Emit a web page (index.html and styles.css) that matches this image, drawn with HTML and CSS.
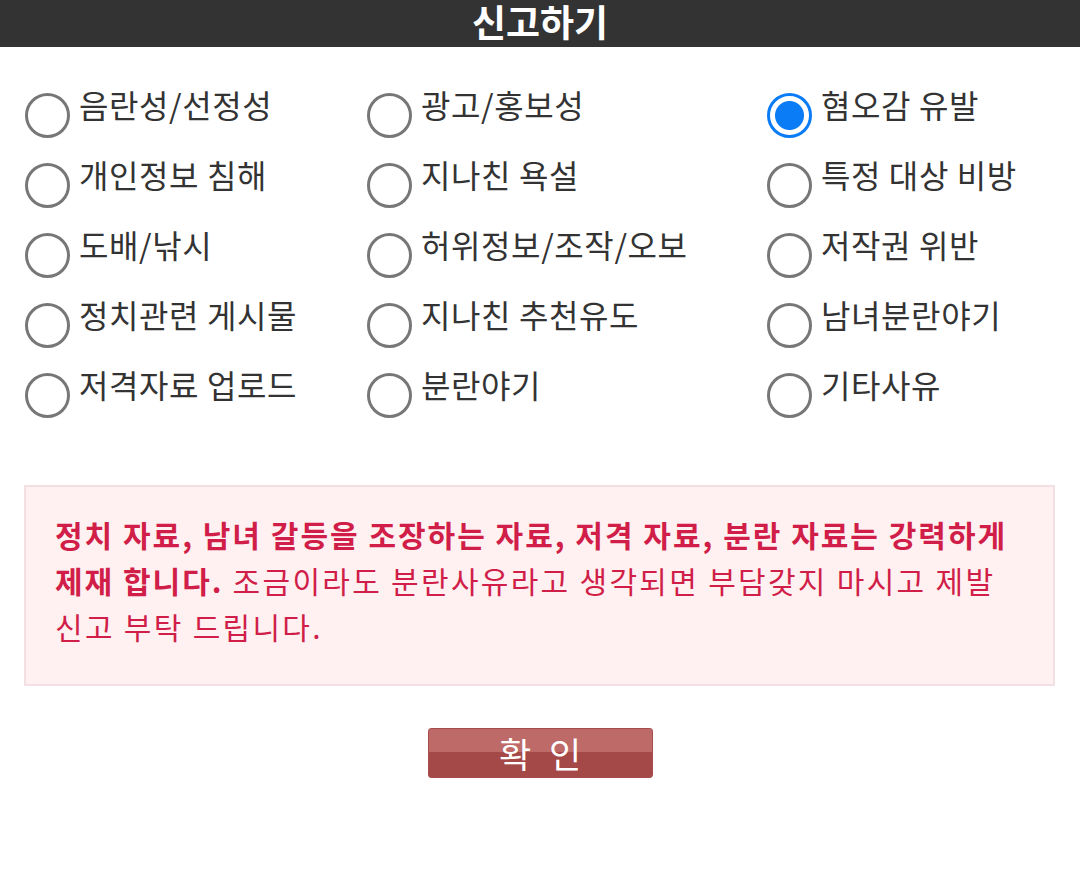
FILE: index.html
```html
<html>
<head>
    <meta charset="utf-8">
    <title>신고하기</title>
    <link rel="stylesheet" href="styles.css">
</head>
<body>
    <div class="header">신고하기</div>

    <form class="report-form">
    <div class="reason-grid">
        <label class="reason"><input type="radio" name="reason"><span>음란성/선정성</span></label>
        <label class="reason"><input type="radio" name="reason"><span>광고/홍보성</span></label>
        <label class="reason"><input type="radio" name="reason" checked><span>혐오감 유발</span></label>

        <label class="reason"><input type="radio" name="reason"><span>개인정보 침해</span></label>
        <label class="reason"><input type="radio" name="reason"><span>지나친 욕설</span></label>
        <label class="reason"><input type="radio" name="reason"><span>특정 대상 비방</span></label>

        <label class="reason"><input type="radio" name="reason"><span>도배/낚시</span></label>
        <label class="reason"><input type="radio" name="reason"><span>허위정보/조작/오보</span></label>
        <label class="reason"><input type="radio" name="reason"><span>저작권 위반</span></label>

        <label class="reason"><input type="radio" name="reason"><span>정치관련 게시물</span></label>
        <label class="reason"><input type="radio" name="reason"><span>지나친 추천유도</span></label>
        <label class="reason"><input type="radio" name="reason"><span>남녀분란야기</span></label>

        <label class="reason"><input type="radio" name="reason"><span>저격자료 업로드</span></label>
        <label class="reason"><input type="radio" name="reason"><span>분란야기</span></label>
        <label class="reason"><input type="radio" name="reason"><span>기타사유</span></label>
    </div>

    <div class="notice">
        <b>정치 자료, 남녀 갈등을 조장하는 자료, 저격 자료, 분란 자료는 강력하게 제재 합니다.</b> 조금이라도 분란사유라고 생각되면 부담갖지 마시고 제발 신고 부탁 드립니다.
    </div>

    <div class="actions">
        <button type="button" class="btn-ok">확 인</button>
    </div>
    </form>
</body>
</html>
```

FILE: styles.css
```css
body {
    margin: 0;
    background: #fff;
    font-family: "Noto Sans CJK KR", "Noto Sans", sans-serif;
    color: #333;
}

.header {
    height: 47px;
    line-height: 42px;
    background: #333;
    color: #fff;
    font-size: 37px;
    font-weight: bold;
    text-align: center;
}

/* radio list */
.reason-grid {
    display: grid;
    grid-template-columns: 342px 400px 1fr;
    grid-auto-rows: 70px;
    padding: 43px 0 0 25px;
}

.reason {
    display: flex;
    align-items: flex-start;
    gap: 9px;
    font-size: 32px;
    line-height: 32px;
    letter-spacing: 0.6px;
    cursor: pointer;
}

.reason input {
    appearance: none;
    -webkit-appearance: none;
    flex: none;
    width: 45px;
    height: 45px;
    margin: 3px 0 0 0;
    border: 3px solid #777;
    border-radius: 50%;
    background: #fff;
}

.reason input:checked {
    border-color: #0a7cf5;
    background: radial-gradient(circle, #0a7cf5 0, #0a7cf5 14px, #fff 15px);
}

.reason span {
    white-space: nowrap;
    margin-top: -2px;
}

/* warning box */
.notice {
    margin: 45px 25px 0 24px;
    padding: 24px 28px 35px 29px;
    background: #fff0f2;
    border: 2px solid #f3e0e4;
    color: #d01e48;
    font-size: 30px;
    line-height: 46px;
    letter-spacing: 2.3px;
}

.notice b {
    font-weight: bold;
    letter-spacing: 2px;
}

.actions {
    display: flex;
    justify-content: center;
    margin-top: 42px;
}

.btn-ok {
    width: 225px;
    height: 50px;
    padding: 0;
    border: 1px solid #a84d4d;
    border-radius: 3px;
    background: linear-gradient(#be6a69 0, #be6a69 48%, #a54848 48%, #a54848 100%);
    color: #fff;
    font-family: "Noto Sans CJK KR", sans-serif;
    font-size: 35px;
    line-height: 46px;
    letter-spacing: 5px;
    text-indent: 5px;
    cursor: pointer;
}
```
